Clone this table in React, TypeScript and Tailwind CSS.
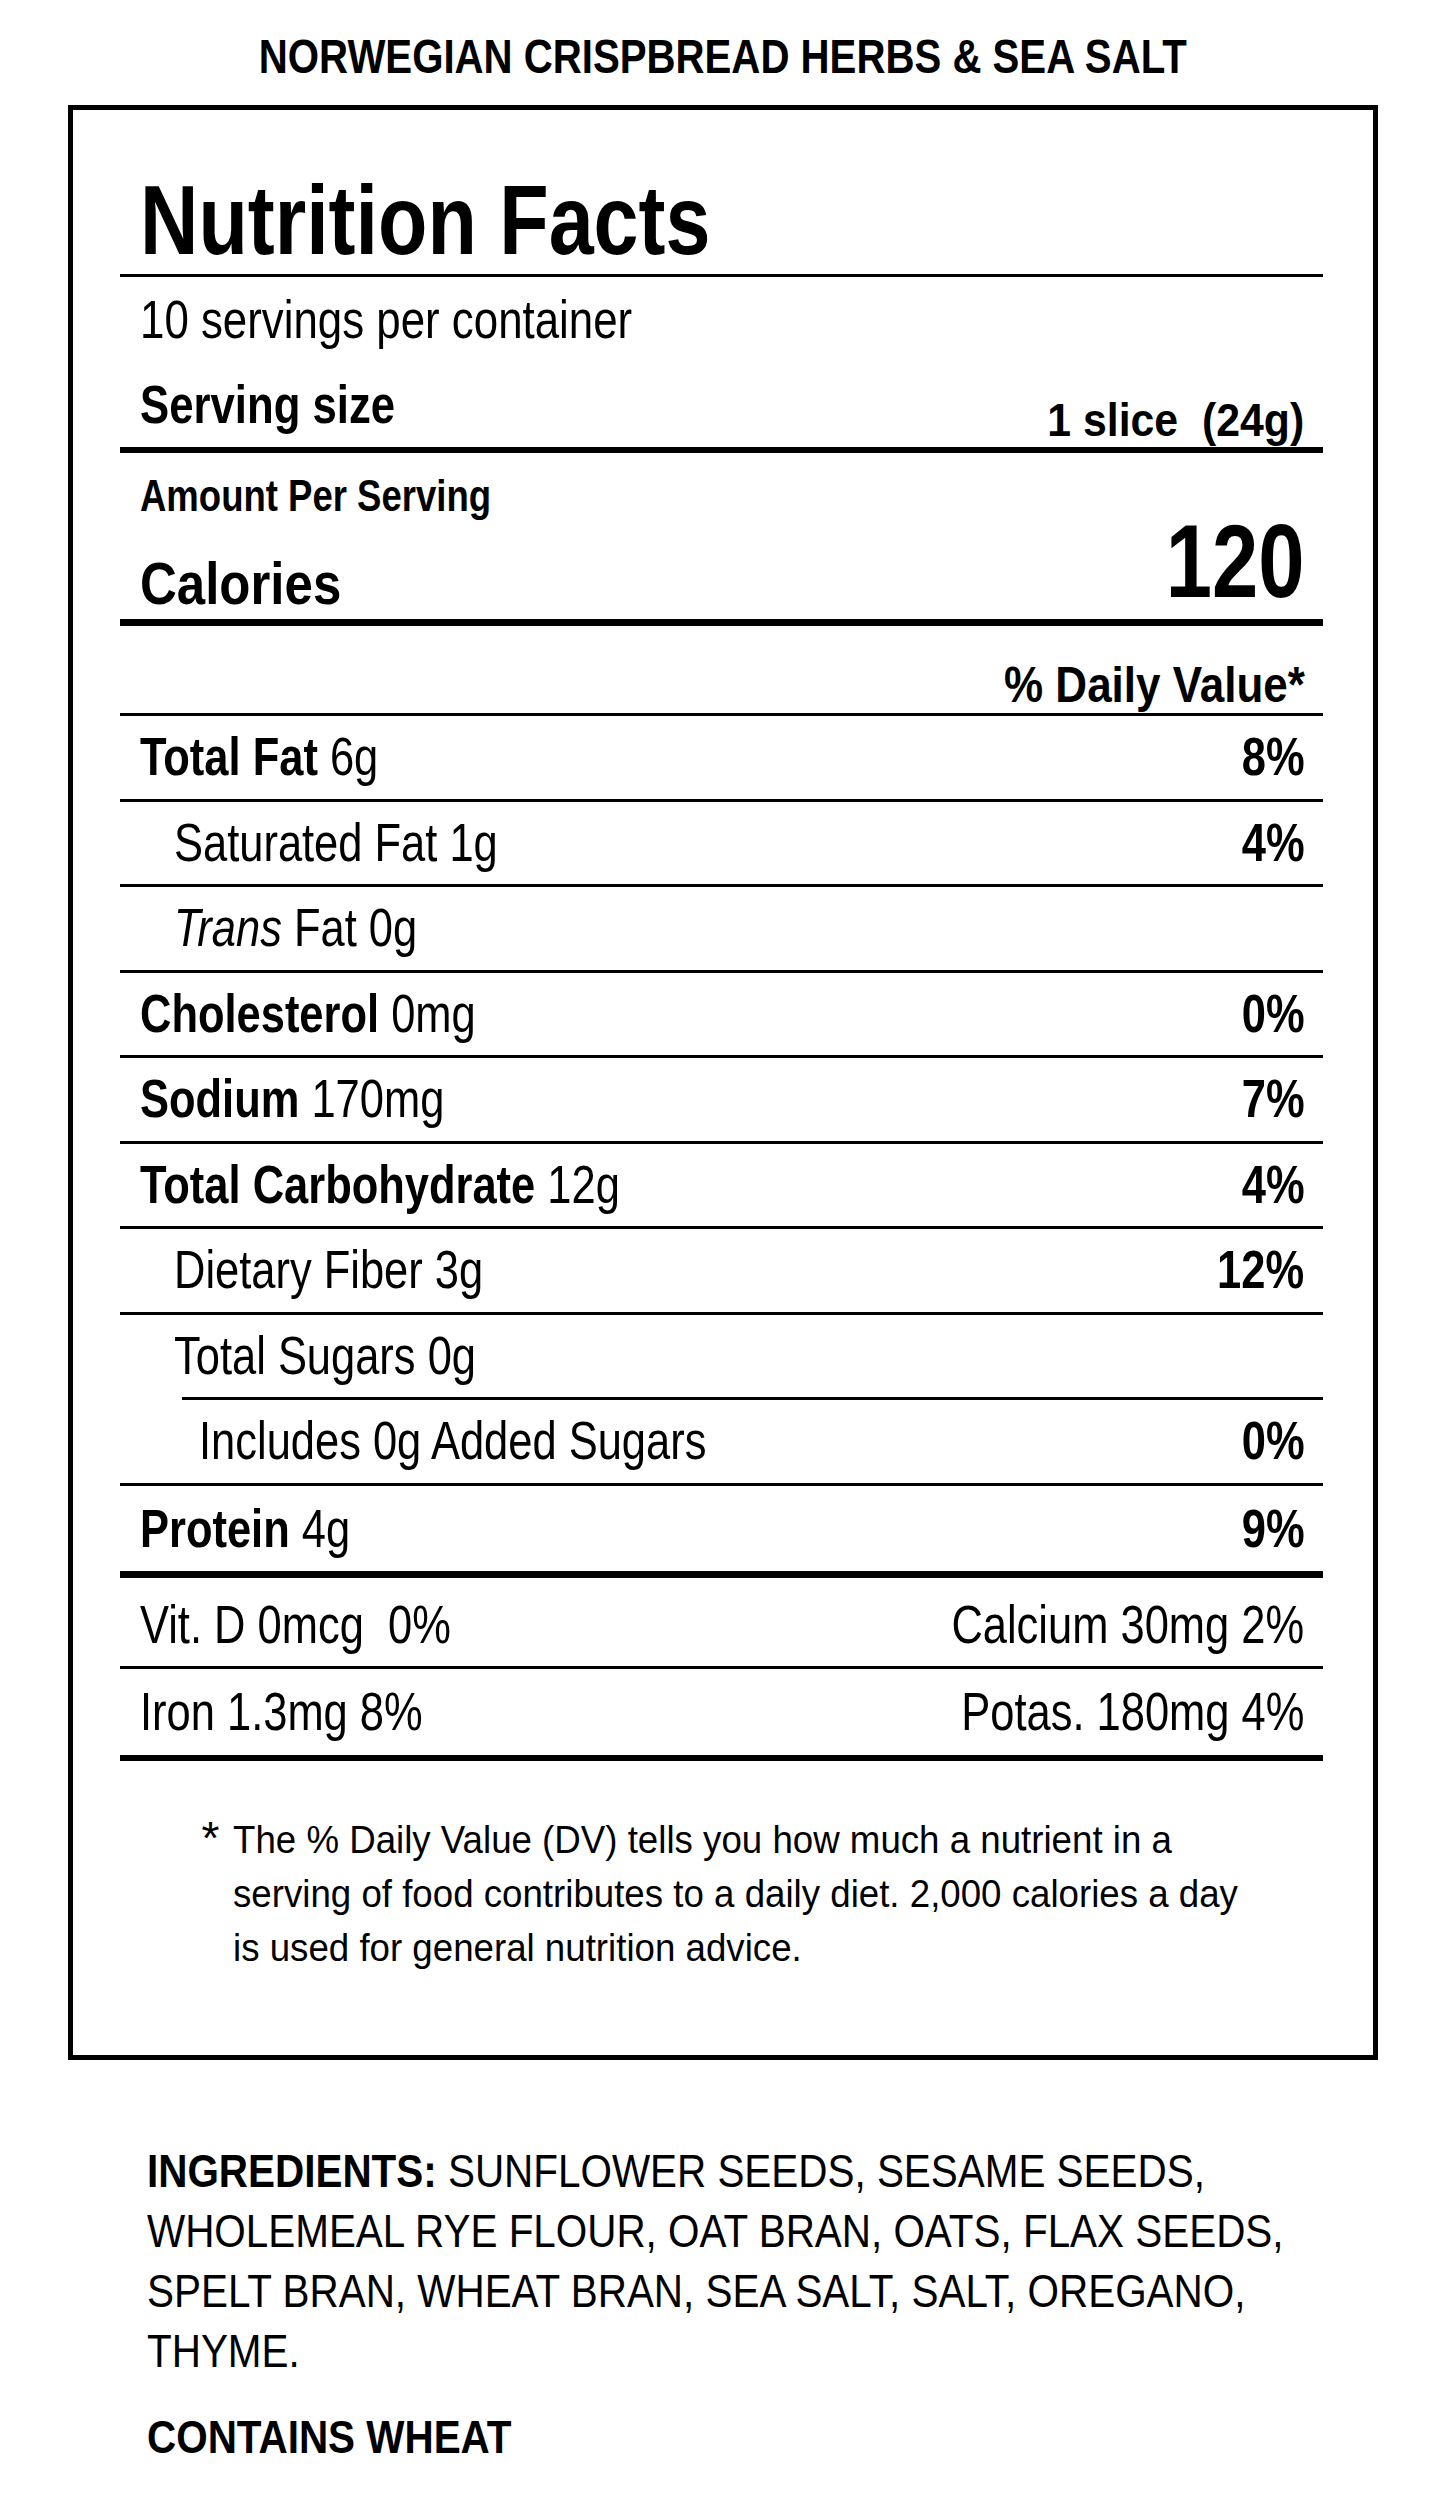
import React from 'react';

const FONT = "font-['Liberation_Sans',Arial,sans-serif]";
// the label uses a condensed grotesk; squeeze Liberation Sans to its width
const L82 = 'inline-block whitespace-nowrap origin-left scale-x-[0.82]';
const R82 = 'inline-block whitespace-nowrap origin-right scale-x-[0.82]';

type Nutrient = {
  name: React.ReactNode;
  amount: string;
  dv?: string;
  bold?: boolean;
  indent?: 0 | 1 | 2;
  lineIndent?: boolean;
  last?: boolean;
};

const NUTRIENTS: Nutrient[] = [
  { name: 'Total Fat', amount: '6g', dv: '8%', bold: true },
  { name: 'Saturated Fat', amount: '1g', dv: '4%', indent: 1 },
  { name: <><i>Trans</i> Fat</>, amount: '0g', indent: 1 },
  { name: 'Cholesterol', amount: '0mg', dv: '0%', bold: true },
  { name: 'Sodium', amount: '170mg', dv: '7%', bold: true },
  { name: 'Total Carbohydrate', amount: '12g', dv: '4%', bold: true },
  { name: 'Dietary Fiber', amount: '3g', dv: '12%', indent: 1 },
  { name: 'Total Sugars', amount: '0g', indent: 1 },
  { name: 'Includes 0g Added Sugars', amount: '', dv: '0%', indent: 2, lineIndent: true },
  { name: 'Protein', amount: '4g', dv: '9%', bold: true, last: true },
];

const indentClass = ['pl-[20px]', 'pl-[54px]', 'pl-[79px]'];

function NutrientRow({ n }: { n: Nutrient }) {
  return (
    <>
      <div className={`h-[3px] bg-black ${n.lineIndent ? 'ml-[62px]' : ''}`} />
      <div
        className={`flex justify-between pr-[18px] text-[53px] ${indentClass[n.indent ?? 0]} ${
          n.last ? 'h-[85px] leading-[85px]' : 'h-[82.5px] leading-[82.5px]'
        }`}
      >
        <span className={L82}>
          {n.bold ? <b>{n.name}</b> : n.name}
          {n.amount && ` ${n.amount}`}
        </span>
        {n.dv && <b className={R82}>{n.dv}</b>}
      </div>
    </>
  );
}

export default function App() {
  return (
    <div className={`min-h-screen w-full bg-white text-black ${FONT}`}>
      <h1 className="pt-[31px] text-center text-[49px] font-bold leading-[50px]">
        <span className="inline-block whitespace-nowrap scale-x-[0.82]">NORWEGIAN CRISPBREAD HERBS &amp; SEA SALT</span>
      </h1>

      <section className="mx-auto mt-[24px] w-[1310px] border-[5px] border-black pl-[47px] pr-[50px]">
        <div className="h-[164px] pl-[20px] pt-[61px] text-[98px] font-bold leading-[98px]">
          <span className="inline-block whitespace-nowrap origin-left scale-x-[0.825]">Nutrition Facts</span>
        </div>
        <div className="h-[3px] bg-black" />

        <div className="h-[85px] pl-[20px] pt-[16px] text-[53px] leading-[53px]">
          <span className="inline-block whitespace-nowrap origin-left scale-x-[0.827]">10 servings per container</span>
        </div>
        <div className="flex h-[85px] items-end justify-between pl-[20px] pr-[18px] font-bold">
          <span className="text-[53px] leading-[85px]">
            <span className="inline-block whitespace-nowrap origin-left scale-x-[0.825]">Serving size</span>
          </span>
          <span className="text-[46px] leading-[54px]">
            <span className="inline-block whitespace-pre origin-right scale-x-[0.93]">1 slice  (24g)</span>
          </span>
        </div>
        <div className="h-[6px] bg-black" />

        <div className="flex h-[166px] items-end justify-between pl-[20px] pr-[18px] font-bold">
          <div className="flex flex-col">
            <span className="pt-[21px] text-[44px] leading-[44px]">
              <span className="inline-block whitespace-nowrap origin-left scale-x-[0.83]">Amount Per Serving</span>
            </span>
            <span className="mt-[30px] text-[60px] leading-[71px]">
              <span className="inline-block whitespace-nowrap origin-left scale-x-[0.85]">Calories</span>
            </span>
          </div>
          <span className="text-[104px] leading-[116px]">
            <span className="inline-block origin-right scale-x-[0.8]">120</span>
          </span>
        </div>
        <div className="h-[7px] bg-black" />

        <div className="flex h-[87px] items-end justify-end pr-[18px]">
          <span className="text-[50px] font-bold leading-[56px]">
            <span className="inline-block whitespace-nowrap origin-right scale-x-[0.88]">% Daily Value*</span>
          </span>
        </div>

        {NUTRIENTS.map((n, i) => (
          <NutrientRow key={i} n={n} />
        ))}

        <div className="h-[7px] bg-black" />
        <div className="flex h-[88px] justify-between pl-[20px] pr-[18px] pt-[5px] text-[53px] leading-[83px]">
          <span className={`${L82} whitespace-pre`}>Vit. D 0mcg  0%</span>
          <span className={R82}>Calcium 30mg 2%</span>
        </div>
        <div className="h-[3px] bg-black" />
        <div className="flex h-[86px] justify-between pl-[20px] pr-[18px] text-[53px] leading-[86px]">
          <span className={L82}>Iron 1.3mg 8%</span>
          <span className={R82}>Potas. 180mg 4%</span>
        </div>
        <div className="h-[6px] bg-black" />

        <div className="flex h-[294px] gap-[14px] pl-[82px] pt-[52px] text-[38px] leading-[54px]">
          <span className="text-[46px] leading-[50px]">*</span>
          <p className="origin-left scale-x-[0.965] whitespace-nowrap">
            The % Daily Value (DV) tells you how much a nutrient in a
            <br />
            serving of food contributes to a daily diet. 2,000 calories a day
            <br />
            is used for general nutrition advice.
          </p>
        </div>
      </section>

      <div className="pl-[147px] pt-[81px] text-[47px] leading-[60px]">
        <div className="origin-left scale-x-[0.86] whitespace-nowrap">
          <p>
            <b>INGREDIENTS:</b> SUNFLOWER SEEDS, SESAME SEEDS,
            <br />
            WHOLEMEAL RYE FLOUR, OAT BRAN, OATS, FLAX SEEDS,
            <br />
            SPELT BRAN, WHEAT BRAN, SEA SALT, SALT, OREGANO,
            <br />
            THYME.
          </p>
          <p className="mt-[26px] font-bold">CONTAINS WHEAT</p>
        </div>
      </div>
    </div>
  );
}
